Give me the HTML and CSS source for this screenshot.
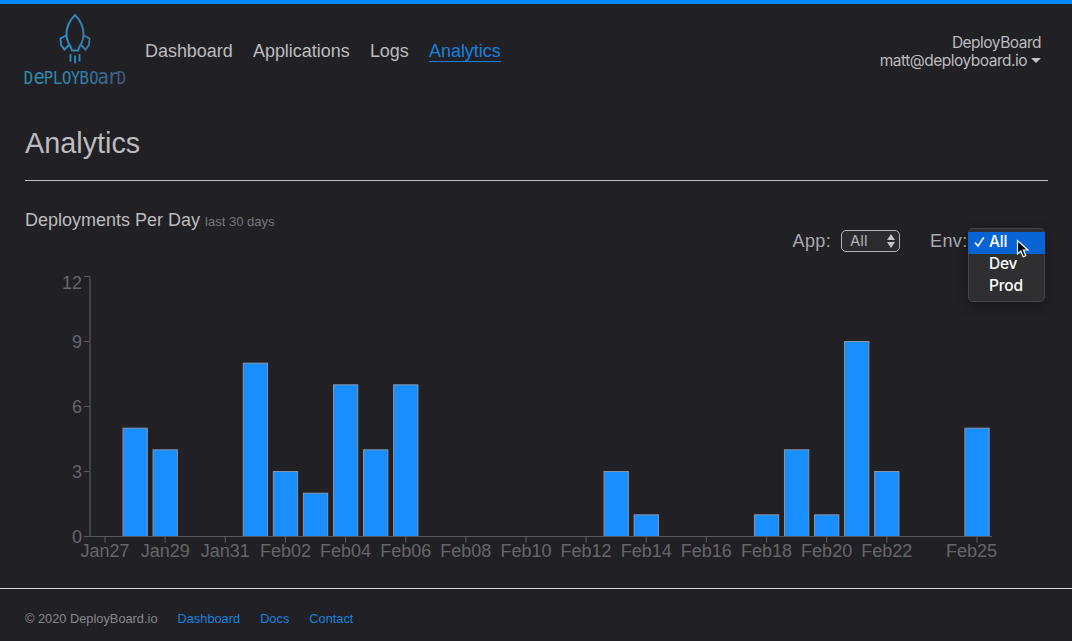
FILE: index.html
```html
<!DOCTYPE html>
<html lang="en">
<head>
    <meta charset="UTF-8">
    <meta name="viewport" content="width=device-width, initial-scale=1.0">
    <title>DeployBoard - Analytics</title>
    <link rel="stylesheet" href="styles.css">
</head>
<body>
    <header class="header">
        <a class="logo" href="#">
            <svg width="104" height="80" viewBox="0 0 104 80">
                <defs>
                    <linearGradient id="rocket-fill" gradientUnits="userSpaceOnUse" x1="32" y1="0" x2="72" y2="0">
                        <stop offset="0" stop-color="#2494cf"/>
                        <stop offset="1" stop-color="#3f749f"/>
                    </linearGradient>
                    <linearGradient id="name-fill" gradientUnits="userSpaceOnUse" x1="0" y1="0" x2="104" y2="0">
                        <stop offset="0" stop-color="#298fae"/>
                        <stop offset="0.5" stop-color="#2f83b4"/>
                        <stop offset="1" stop-color="#435478"/>
                    </linearGradient>
                </defs>
                <g fill="none" stroke="url(#rocket-fill)" stroke-width="1.9">
                    <path d="M51 5C45.500 10.500 42.500 17 42.500 24C42.500 29 44 33 46.500 36.500L48 40.500H54L55.500 36.500C58 33 59.500 29 59.500 24C59.500 17 56.500 10.500 51 5Z"/>
                    <path d="M42.200 25.500L36.500 28.500L37 35L40.500 39.500L45.500 34.500"/>
                    <path d="M59.800 25.500L65.500 28.500L65 35L61.500 39.500L56.500 34.500"/>
                    <path d="M46.500 44V51.500M51 45.500V53.500M55.500 44V51.500"/>
                </g>
                <text class="logo-name" transform="scale(1 1.16)" y="63.500" x="-0.200 9.600 19.800 29 38 46.800 55.600 65.200 73.500 83.200 92.800" fill="url(#name-fill)">D<tspan class="tall">e</tspan>PLOYBO<tspan class="tall">ar</tspan>D</text>
            </svg>
        </a>
        <nav class="nav">
            <a href="#">Dashboard</a>
            <a href="#">Applications</a>
            <a href="#">Logs</a>
            <a class="active" href="#">Analytics</a>
        </nav>
        <div class="user">
            <div>DeployBoard</div>
            <div>matt@deployboard.io<span class="caret"></span></div>
        </div>
    </header>

    <main class="content">
        <h1>Analytics</h1>
        <h2>Deployments Per Day <small>last 30 days</small></h2>
        <div class="filters">
            <span class="filter-label">App:</span>
            <button class="select">
                All
                <svg width="10" height="16" viewBox="0 0 10 16"><path d="M5 1L9 7H1ZM5 15L1 9H9Z" fill="#c4c4c6"/></svg>
            </button>
            <span class="filter-label env">Env:</span>
            <div class="dropdown">
                <ul class="menu">
                    <li class="selected">
                        <svg class="check" width="11" height="12" viewBox="0 0 11 12"><path d="M1 6.500L4 10L9.700 1.500" fill="none" stroke="#fff" stroke-width="1.500"/></svg>
                        All
                    </li>
                    <li>Dev</li>
                    <li>Prod</li>
                </ul>
                <svg class="cursor" width="14" height="20" viewBox="0 0 14 20"><path d="M1.500 1.500V15L4.800 12L7.200 17.800L9.800 16.700L7.400 11H12Z" fill="#000" stroke="#fff" stroke-width="1.200"/></svg>
            </div>
        </div>
        <svg class="chart" id="chart" width="1023" height="310" viewBox="0 0 1023 310"></svg>
    </main>

    <footer class="footer">
        <span>© 2020 DeployBoard.io</span>
        <a href="#">Dashboard</a>
        <a href="#">Docs</a>
        <a href="#">Contact</a>
    </footer>

    <script>
        const chart = document.getElementById('chart');
        const deployments = [0, 5, 4, 0, 0, 8, 3, 2, 7, 4, 7, 0, 0, 0, 0, 0, 0, 3, 1, 0, 0, 0, 1, 4, 1, 9, 3, 0, 0, 5];
        const labels = {
            0: 'Jan27', 2: 'Jan29', 4: 'Jan31', 6: 'Feb02', 8: 'Feb04', 10: 'Feb06', 12: 'Feb08', 14: 'Feb10',
            16: 'Feb12', 18: 'Feb14', 20: 'Feb16', 22: 'Feb18', 24: 'Feb20', 26: 'Feb22', 29: 'Feb25'
        };
        const plotLeft = 65;
        const plotTop = 16.5;
        const plotWidth = 902;
        const plotHeight = 260;
        const plotBottom = plotTop + plotHeight;
        const maxCount = 12;
        const step = plotWidth / deployments.length;

        function drawChart() {
            let out = '';
            deployments.forEach((count, i) => {
                const center = plotLeft + step * (i + 0.5);
                if (count > 0) {
                    const h = plotHeight * count / maxCount;
                    out += `<rect class="bar" x="${center - 12.1}" y="${plotBottom - h}" width="24.3" height="${h}"/>`;
                }
                if (labels[i]) {
                    // the last label is pulled in from the right edge
                    const textX = i === deployments.length - 1 ? center - 5.5 : center;
                    out += `<path class="axis" d="M${center} ${plotBottom}v6"/>`;
                    out += `<text class="tick" x="${textX}" y="${plotBottom + 20.5}" text-anchor="middle">${labels[i]}</text>`;
                }
            });
            for (let v = 0; v <= maxCount; v += 3) {
                const y = plotBottom - plotHeight * v / maxCount;
                const textY = v === maxCount ? y + 12.5 : y + 6.5;
                out += `<path class="axis" d="M${plotLeft - 6} ${y}h6"/>`;
                out += `<text class="tick" x="${plotLeft - 8}" y="${textY}" text-anchor="end">${v}</text>`;
            }
            out += `<path class="axis" d="M${plotLeft} ${plotTop}V${plotBottom}H${plotLeft + plotWidth}"/>`;
            chart.innerHTML = out;
        }

        drawChart();
    </script>
</body>
</html>
```
FILE: styles.css
```css
* {
    box-sizing: border-box;
}
body {
    margin: 0;
    height: 641px;
    overflow: hidden;
    display: flex;
    flex-direction: column;
    border-top: 4px solid #0088ff;
    background-color: #212025;
    color: #bcbcbe;
    font-family: "Liberation Sans", Arial, sans-serif;
    font-size: 18px;
}
a {
    color: #1682df;
    text-decoration: none;
}
.header {
    display: flex;
    height: 96px;
    padding: 6px 31px 0 24px;
}
.logo svg {
    display: block;
}
.logo-name {
    font-family: "DejaVu Sans Mono", monospace;
    font-size: 15.5px;
}
.logo-name .tall {
    font-size: 19px;
}
.nav {
    display: flex;
    align-items: flex-start;
    gap: 20.2px;
    margin-left: 17px;
    padding-top: 31px;
    font-size: 17.95px;
}
.nav a {
    color: #bcbcbe;
    line-height: 20px;
    border-bottom: 1px solid transparent;
}
.nav a.active {
    color: #1682df;
    border-bottom-color: #1682df;
}
.user {
    margin-left: auto;
    padding-top: 24px;
    font-family: Inter, sans-serif;
    font-size: 15.5px;
    line-height: 18px;
    letter-spacing: -0.5px;
    text-align: right;
}
.caret {
    display: inline-block;
    margin-left: 4px;
    vertical-align: 3px;
    border: 5px solid transparent;
    border-top-color: #c4c4c6;
    border-bottom: 0;
}
.content {
    padding: 0 24px 0 25px;
    height: 488px;
}
h1 {
    margin: 0;
    height: 81px;
    padding-top: 26px;
    border-bottom: 1px solid #bebec0;
    font-size: 28.8px;
    line-height: 34px;
    font-weight: normal;
}
h2 {
    margin: 29px 0 0;
    font-size: 18px;
    line-height: 21px;
    font-weight: normal;
}
h2 small {
    font-size: 13px;
    color: #77777b;
}
.filters {
    display: flex;
    align-items: center;
    height: 22px;
    margin: -2px 0 0 767.5px;
}
.filter-label {
    width: 48.5px;
    letter-spacing: 0.4px;
    color: #a9a9ab;
}
.filter-label.env {
    width: 38px;
    margin-left: 30px;
}
.select {
    display: flex;
    align-items: center;
    justify-content: space-between;
    width: 59px;
    height: 22px;
    padding: 0 3px 1px 8px;
    border: 1px solid #b4b4b6;
    border-radius: 5px;
    background-color: #2b2b2f;
    color: #b0b0b3;
    font-family: Inter, sans-serif;
    font-size: 15px;
}
.dropdown {
    position: relative;
    align-self: flex-start;
}
.menu {
    position: absolute;
    top: -2px;
    left: 0;
    width: 77px;
    height: 74px;
    margin: 0;
    padding: 3px 0 0;
    border: 1px solid #47474b;
    border-radius: 5px;
    background-color: #2f2f32;
    box-shadow: 0 4px 12px rgba(0, 0, 0, 0.35);
    list-style: none;
    font-family: Inter, sans-serif;
    font-size: 15.5px;
    font-weight: 500;
    letter-spacing: -0.2px;
    color: #fff;
}
.menu li {
    height: 22px;
    padding-left: 20px;
    line-height: 20px;
}
.menu .selected {
    display: flex;
    margin: 0 -1px;
    padding-left: 6px;
    background-color: #0863d5;
}
.check {
    margin: 4px 4px 0 0;
}
.cursor {
    position: absolute;
    top: 9px;
    left: 48px;
}
.chart {
    display: block;
    margin-top: 8px;
}
.axis {
    fill: none;
    stroke: #58585c;
    stroke-width: 1.2;
}
.bar {
    fill: #198fff;
    stroke: #8a96a5;
}
.tick {
    fill: #66666a;
    font-size: 18px;
}
.footer {
    display: flex;
    align-items: center;
    gap: 20px;
    height: 53px;
    padding: 7px 25px 0;
    border-top: 1px solid #d5d5d7;
    font-size: 12.8px;
    color: #87878a;
}
```
